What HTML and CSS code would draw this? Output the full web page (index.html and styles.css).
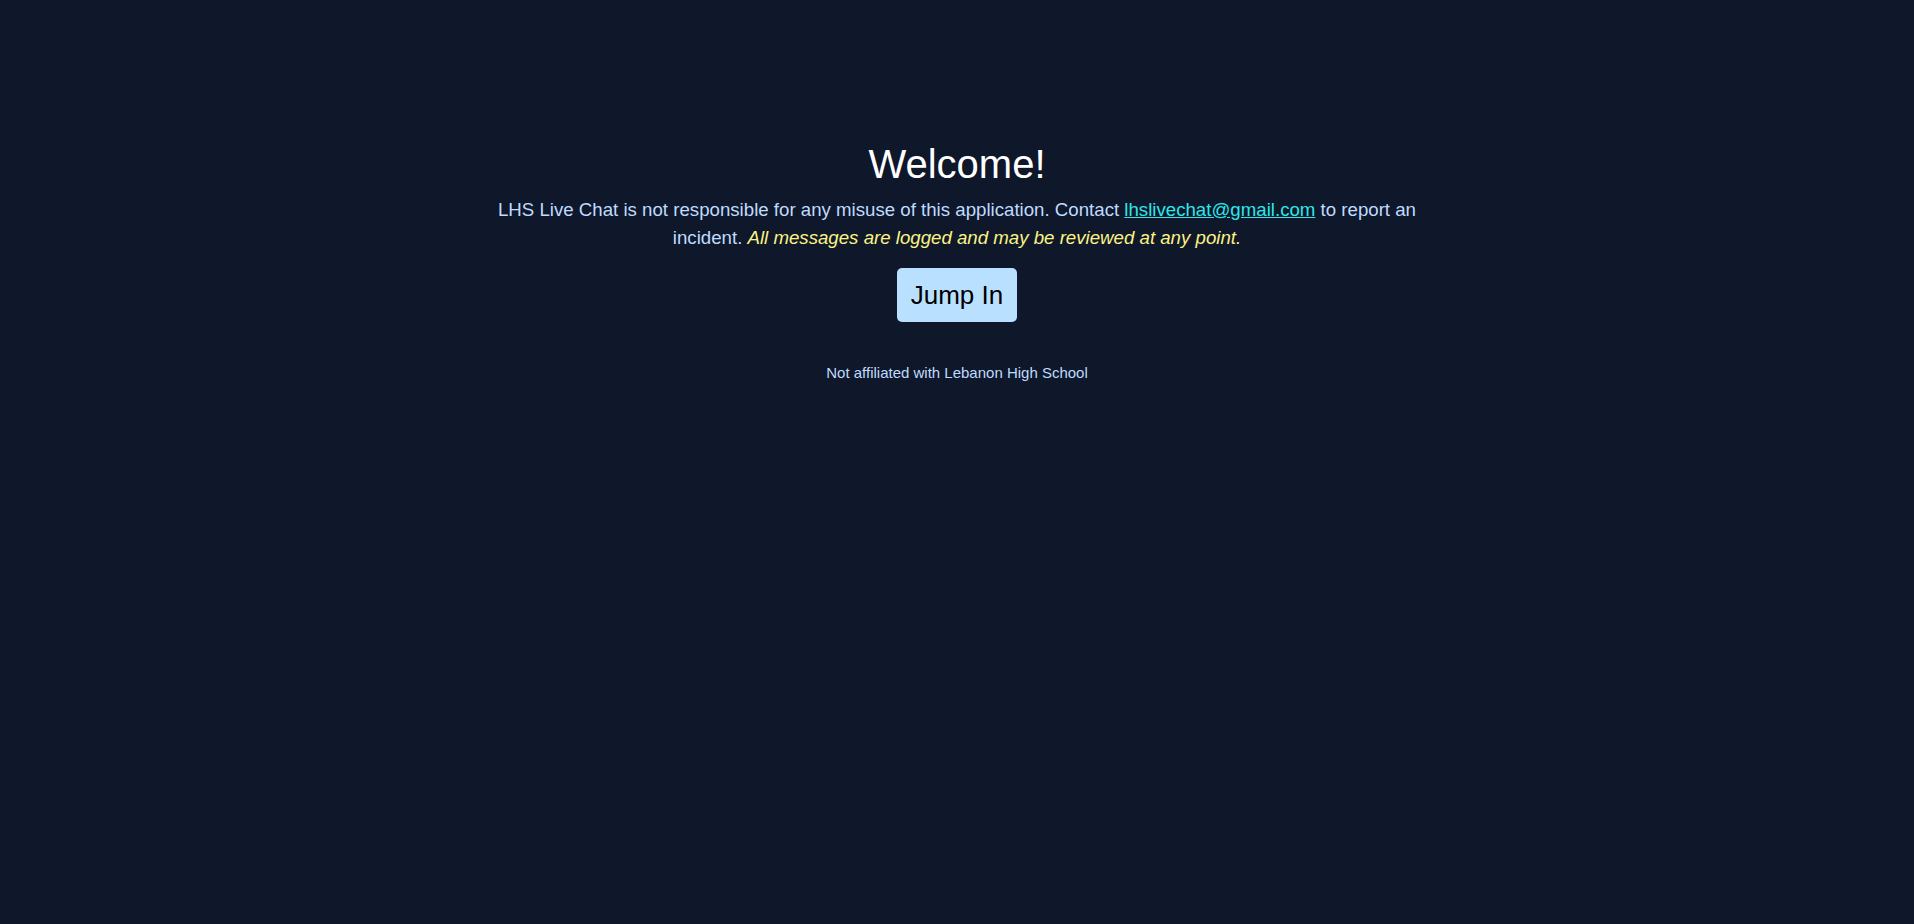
FILE: index.html
```html
<!DOCTYPE html>
<html lang="en">
<head>
<meta charset="utf-8">
<title>LHS Live Chat</title>
<link rel="stylesheet" href="styles.css">
</head>
<body>
<main class="welcome">
  <h1 class="title">Welcome!</h1>
  <p class="notice">LHS Live Chat is not responsible for any misuse of this application. Contact <a class="mail" href="#">lhslivechat@gmail.com</a> to report an incident. <em class="warn">All messages are logged and may be reviewed at any point.</em></p>
  <button class="jump">Jump In</button>
  <p class="footer">Not affiliated with Lebanon High School</p>
</main>
</body>
</html>
```

FILE: styles.css
```css
html, body {
  margin: 0;
  padding: 0;
  background: #0f172a;
  min-height: 100%;
}
body {
  font-family: "Liberation Sans", Arial, sans-serif;
  color: #bfdbfe;
}
.welcome {
  display: flex;
  flex-direction: column;
  align-items: center;
  text-align: center;
  padding-top: 140px;
}
.title {
  margin: 0;
  font-size: 40px;
  line-height: 48px;
  font-weight: normal;
  color: #ffffff;
}
.notice {
  margin: 8px 0 0;
  width: 50%;
  font-size: 18.67px;
  line-height: 28px;
}
.mail {
  color: #2ee6e8;
  text-decoration: underline;
}
.warn {
  color: #fbf385;
  font-style: italic;
}
.jump {
  margin-top: 16px;
  font-family: "Liberation Sans", Arial, sans-serif;
  font-size: 26px;
  line-height: 30px;
  padding: 12px 14px;
  border: none;
  border-radius: 5px;
  background: #bae0ff;
  color: #000000;
  cursor: pointer;
}
.footer {
  margin: 41px 0 0;
  font-size: 15px;
  line-height: 20px;
}
```
